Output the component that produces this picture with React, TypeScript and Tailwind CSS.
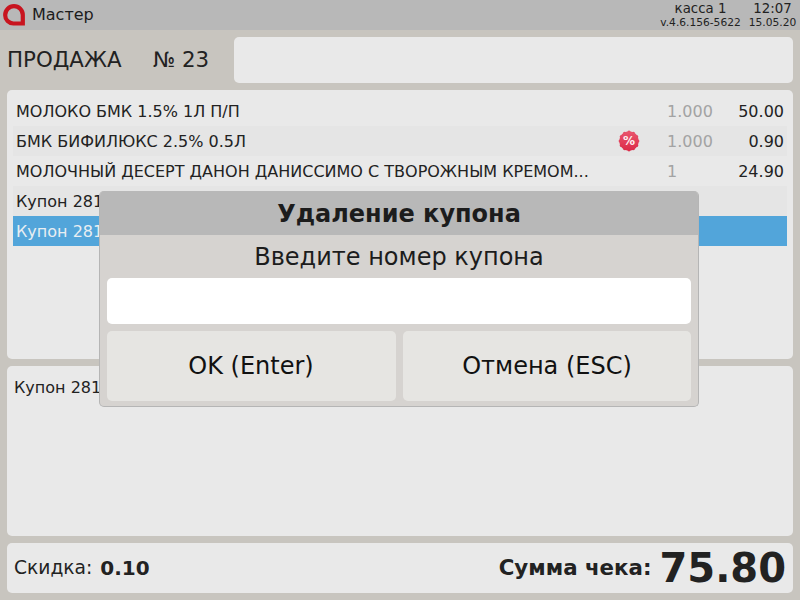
const font = { fontFamily: '"DejaVu Sans", sans-serif' };

interface ReceiptRow {
  name: string;
  qty?: string;
  price?: string;
  striped?: boolean;
  selected?: boolean;
  discount?: boolean;
}

const rows: ReceiptRow[] = [
  { name: 'МОЛОКО БМК 1.5% 1Л П/П', qty: '1.000', price: '50.00' },
  { name: 'БМК БИФИЛЮКС 2.5% 0.5Л', qty: '1.000', price: '0.90', striped: true, discount: true },
  { name: 'МОЛОЧНЫЙ ДЕСЕРТ ДАНОН ДАНИССИМО С ТВОРОЖНЫМ КРЕМОМ...', qty: '1', price: '24.90' },
  { name: 'Купон 281', striped: true },
  { name: 'Купон 281', selected: true },
];

function Logo() {
  return (
    <svg width="22" height="22" viewBox="0 0 22 22" className="ml-[3px] shrink-0">
      <path
        d="M11 2.2a8.8 8.8 0 0 0-8.8 8.8v.2a8.2 8.2 0 0 0 8.2 8.3h9.4V11A8.8 8.8 0 0 0 11 2.2Z"
        fill="none"
        stroke="#c8141f"
        strokeWidth="4.2"
        strokeMiterlimit="10"
      />
    </svg>
  );
}

// red seal with a scalloped edge
function DiscountBadge() {
  const bumps = Array.from({ length: 12 }, (_, i) => (i * Math.PI) / 6);
  return (
    <svg width="22" height="22" viewBox="0 0 22 22" className="block">
      <defs>
        <linearGradient id="seal" x1="0" y1="0" x2="0" y2="1">
          <stop offset="0" stopColor="#e9566e" />
          <stop offset="1" stopColor="#dc2a48" />
        </linearGradient>
      </defs>
      {bumps.map((a, i) => (
        <circle key={i} cx={11 + 8.8 * Math.cos(a)} cy={11 + 8.8 * Math.sin(a)} r="1.6" fill={i > 0 && i < 6 ? '#dc2f4c' : '#e4455f'} />
      ))}
      <circle cx="11" cy="11" r="9.8" fill="url(#seal)" />
      <text x="11" y="15.3" textAnchor="middle" fontSize="12" fontWeight="700" fill="#fdf0f2">
        %
      </text>
    </svg>
  );
}

function Row({ row }: { row: ReceiptRow }) {
  const bg = row.selected ? 'bg-[#52a5da]' : row.striped ? 'bg-[#e5e5e5]' : '';
  return (
    <div className={`flex h-[30px] items-center px-[3px] pt-[2px] text-[16px] text-[#222222] ${bg}`}>
      <div className={`flex-1 truncate ${row.selected ? 'text-[#e8eef2]' : ''}`}>{row.name}</div>
      {row.discount && (
        <div className="mr-[27px] -mt-[2px]">
          <DiscountBadge />
        </div>
      )}
      {row.qty && <div className="w-[46px] text-[#a3a3a3]">{row.qty}</div>}
      {row.price && <div className="w-[71px] text-right">{row.price}</div>}
    </div>
  );
}

function DeleteCouponDialog() {
  return (
    <div className="absolute left-[99px] top-[191px] h-[216px] w-[600px] overflow-hidden rounded-[5px] border-r border-b border-l border-[#b5b5b5] bg-[#d6d3d0]">
      <div className="flex h-[44px] items-center justify-center bg-[#b8b8b8] pt-[2px] text-[24px] font-bold text-[#1c1c1c]">
        Удаление купона
      </div>
      <div className="flex h-[43px] items-center justify-center text-[24px] text-[#1c1c1c]">
        Введите номер купона
      </div>
      <div className="mx-[7px] h-[46px] rounded-[5px] bg-white" />
      <div className="mx-[7px] mt-[7px] flex gap-[7px]">
        <div className="flex h-[70px] w-[289px] items-center justify-center rounded-[5px] bg-[#e6e5e2] pr-[1px] text-[24px] text-[#111111]">
          OK (Enter)
        </div>
        <div className="flex h-[70px] flex-1 items-center justify-center rounded-[5px] bg-[#e6e5e2] text-[24px] text-[#111111]">
          Отмена (ESC)
        </div>
      </div>
    </div>
  );
}

export default function App() {
  return (
    <div className="relative flex h-[600px] w-[800px] flex-col overflow-hidden bg-[#c8c5bf] text-[#222222]" style={font}>
      {/* Header */}
      <div className="flex h-[30px] items-center bg-[#b8b8b8]">
        <Logo />
        <div className="ml-[7px] flex-1 text-[16px] text-[#1c1c1c]">Мастер</div>
        <div className="flex w-[81px] flex-col items-center">
          <div className="text-[13.33px] leading-[15px]">касса 1</div>
          <div className="whitespace-nowrap text-[10.67px] leading-[14px]">v.4.6.156-5622</div>
        </div>
        <div className="ml-[8px] mr-[4px] flex w-[47px] flex-col items-center">
          <div className="text-[13.33px] leading-[15px]">12:07</div>
          <div className="whitespace-nowrap text-[10.67px] leading-[14px]">15.05.20</div>
        </div>
      </div>

      {/* Title row */}
      <div className="mx-[7px] mt-[7px] flex h-[46px] items-center">
        <div className="w-[146px] text-[21.33px]">ПРОДАЖА</div>
        <div className="w-[81px] text-[21.33px]">№ 23</div>
        <div className="h-full flex-1 rounded-[5px] bg-[#e9e9e9]" />
      </div>

      {/* Receipt list */}
      <div className="mx-[7px] mt-[7px] h-[269px] rounded-[5px] bg-[#e9e9e9] px-[6px] pt-[6px]">
        {rows.map((row, i) => (
          <Row key={i} row={row} />
        ))}
      </div>

      {/* Coupon details */}
      <div className="mx-[7px] mt-[7px] h-[170px] rounded-[5px] bg-[#e9e9e9] px-[7px] pt-[10px] text-[16px]">
        Купон 281
      </div>

      {/* Footer */}
      <div className="mx-[7px] mt-[7px] flex h-[50px] items-center rounded-[5px] bg-[#e9e9e9] px-[7px]">
        <div className="text-[18.67px]">Скидка:</div>
        <div className="ml-[8px] flex-1 text-[20px] font-bold">0.10</div>
        <div className="text-[21.33px] font-bold">Сумма чека:</div>
        <div className="ml-[8px] text-[40px] font-bold leading-none">75.80</div>
      </div>

      <DeleteCouponDialog />
    </div>
  );
}
